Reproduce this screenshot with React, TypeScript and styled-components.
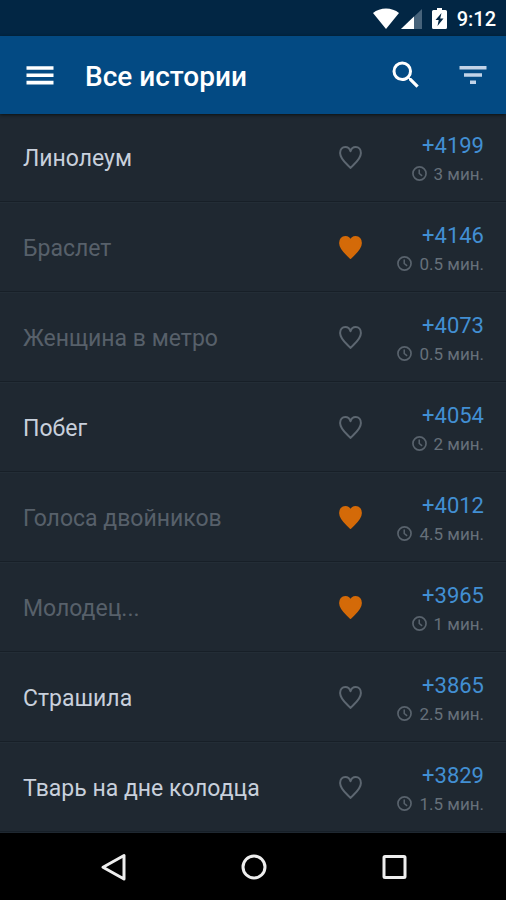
import React, { useState } from "react";
import styled, { createGlobalStyle } from "styled-components";

const GlobalStyle = createGlobalStyle`
  *, *::before, *::after { box-sizing: border-box; }
  body {
    margin: 0;
    background: #000;
    font-family: Roboto, "Noto Sans", sans-serif;
  }
`;

const Screen = styled.div`
  display: flex;
  flex-direction: column;
  min-height: 100vh;
  background: #1f2831;
`;

const StatusBar = styled.div`
  display: flex;
  align-items: center;
  justify-content: flex-end;
  height: 36px;
  padding: 1px 10px 0 0;
  background: #022644;
  color: #fff;
`;

const StatusIcons = styled.div`
  display: flex;
  align-items: center;
  gap: 10px;
`;

const Signals = styled.div`
  display: flex;
  align-items: center;
  gap: 2px;
`;

const Clock = styled.time`
  font-size: 20px;
  line-height: 24px;
  font-weight: 500;
`;

const Toolbar = styled.header`
  position: relative;
  z-index: 1;
  display: flex;
  align-items: center;
  height: 78px;
  padding: 0 15px 0 22px;
  background: #034a83;
  box-shadow: 0 1px 3px rgba(10, 16, 16, 0.9);
`;

const IconButton = styled.button<{ $dim?: boolean }>`
  display: flex;
  padding: 0;
  border: 0;
  background: none;
  color: ${(p) => (p.$dim ? "#c2d3e8" : "#fff")};
  cursor: pointer;
`;

const Title = styled.h1`
  flex: 1;
  margin: 0 0 0 27px;
  padding-top: 4px;
  color: #fff;
  font-size: 28px;
  line-height: 32px;
  font-weight: 500;
`;

const Actions = styled.div`
  display: flex;
  gap: 31px;
`;

/* The list is scrolled slightly beneath the toolbar. */
const List = styled.ul`
  flex: 1;
  margin: -2px 0 0;
  padding: 0;
  list-style: none;
`;

const Row = styled.li`
  display: flex;
  align-items: center;
  height: 90px;
  padding: 2px 22px 0 23px;
  border-bottom: 1px solid #171f27;
  box-shadow: inset 0 1px 0 #232d36;
`;

const StoryLink = styled.a<{ $read: boolean }>`
  flex: 1;
  padding-top: 2px;
  color: ${(p) => (p.$read ? "#57606a" : "#c8d0dc")};
  font-size: 23px;
  line-height: 28px;
  text-decoration: none;
`;

const Stats = styled.div`
  display: flex;
  flex-direction: column;
  align-items: flex-end;
  width: 121px;
`;

const Score = styled.span`
  color: #428fd3;
  font-size: 22px;
  line-height: 32px;
`;

const Duration = styled.span`
  display: flex;
  align-items: center;
  gap: 7px;
  color: #66707a;
  font-size: 17px;
  line-height: 24px;
`;

const NavBar = styled.nav`
  display: flex;
  align-items: center;
  justify-content: center;
  gap: 104px;
  height: 67px;
  padding-left: 1px;
  background: #000;
`;

const stories = [
  { title: "Линолеум", score: "+4199", time: "3 мин.", read: false, liked: false },
  { title: "Браслет", score: "+4146", time: "0.5 мин.", read: true, liked: true },
  { title: "Женщина в метро", score: "+4073", time: "0.5 мин.", read: true, liked: false },
  { title: "Побег", score: "+4054", time: "2 мин.", read: false, liked: false },
  { title: "Голоса двойников", score: "+4012", time: "4.5 мин.", read: true, liked: true },
  { title: "Молодец...", score: "+3965", time: "1 мин.", read: true, liked: true },
  { title: "Страшила", score: "+3865", time: "2.5 мин.", read: false, liked: false },
  { title: "Тварь на дне колодца", score: "+3829", time: "1.5 мин.", read: false, liked: false },
];

const WifiIcon = () => (
  <svg width="26" height="21" viewBox="0 0 26 21" aria-hidden="true">
    <path d="M0 5C7-1 19-1 26 5L13 21Z" fill="#fff" />
  </svg>
);

const CellIcon = () => (
  <svg width="21" height="20" viewBox="0 0 21 20" aria-hidden="true">
    <path d="M21 0V20H0Z" fill="#47637b" />
    <path d="M13 7.6V20H0Z" fill="#fff" />
  </svg>
);

const BatteryIcon = () => (
  <svg width="15" height="21" viewBox="0 0 15 21" aria-hidden="true">
    <path
      d="M5 0H10V2H13.5Q15 2 15 3.5V19.5Q15 21 13.5 21H1.5Q0 21 0 19.5V3.5Q0 2 1.5 2H5Z"
      fill="#fff"
    />
    <path d="M9.5 5L3.5 12H6.7L5.5 18L11.5 10.5H8.2Z" fill="#022644" />
  </svg>
);

const MenuIcon = () => (
  <svg width="36" height="36" viewBox="0 0 24 24" fill="currentColor" aria-hidden="true">
    <path d="M3 18.3h18v-2.4H3v2.4zm0-4.9h18V11H3v2.4zm0-7.3v2.4h18V6.1H3z" />
  </svg>
);

const SearchIcon = () => (
  <svg width="36" height="36" viewBox="0 0 24 24" fill="currentColor" aria-hidden="true">
    <path d="M15.5 14h-.79l-.28-.27A6.47 6.47 0 0 0 16 9.5 6.5 6.5 0 1 0 9.5 16c1.61 0 3.09-.59 4.23-1.57l.27.28v.79l5 4.99L20.49 19l-4.99-5zm-6 0a4.5 4.5 0 1 1 0-9 4.5 4.5 0 0 1 0 9z" />
  </svg>
);

const FilterIcon = () => (
  <svg width="36" height="36" viewBox="0 0 24 24" fill="currentColor" aria-hidden="true">
    <path d="M10 18h4v-2.4h-4V18zM3 6v2.4h18V6H3zm3 7.2h12v-2.4H6v2.4z" />
  </svg>
);

const HeartIcon = ({ filled }: { filled: boolean }) => (
  <svg width="24" height="24" viewBox="0 0 24 24" aria-hidden="true">
    <path
      d="M11.5 22C9 18.7 1.1 13.5 1.1 6.9C1.1 3.4 3.2 1 6.3 1C9 1 10.7 2.6 11.5 5.2C12.3 2.6 14 1 16.7 1C19.8 1 21.9 3.4 21.9 6.9C21.9 13.5 14 18.7 11.5 22Z"
      fill={filled ? "#d46a08" : "none"}
      stroke={filled ? "#d46a08" : "#5d6771"}
      strokeWidth="2"
      strokeLinejoin="round"
    />
  </svg>
);

const TimeIcon = () => (
  <svg width="15" height="15" viewBox="0 0 16 16" fill="none" stroke="#59636d" aria-hidden="true">
    <circle cx="8" cy="8" r="7" strokeWidth="1.8" />
    <path d="M7.7 3.8V8L10.8 10.6" strokeWidth="1.6" />
  </svg>
);

const BackIcon = () => (
  <svg width="36" height="36" viewBox="0 0 36 36" aria-hidden="true">
    <path d="M28 6.5V30L7 18.2Z" fill="none" stroke="#eee" strokeWidth="3" strokeLinejoin="round" />
  </svg>
);

const HomeIcon = () => (
  <svg width="36" height="36" viewBox="0 0 36 36" aria-hidden="true">
    <circle cx="18" cy="18" r="11" fill="none" stroke="#eee" strokeWidth="3" />
  </svg>
);

const RecentsIcon = () => (
  <svg width="36" height="36" viewBox="0 0 36 36" aria-hidden="true">
    <rect x="8" y="7.5" width="21" height="21" rx="1" fill="none" stroke="#eee" strokeWidth="3" />
  </svg>
);

function StoryRow({ story }: { story: (typeof stories)[number] }) {
  const [liked, setLiked] = useState(story.liked);
  return (
    <Row>
      <StoryLink href="#" $read={story.read}>{story.title}</StoryLink>
      <IconButton
        type="button"
        aria-label="В избранное"
        aria-pressed={liked}
        onClick={() => setLiked(!liked)}
      >
        <HeartIcon filled={liked} />
      </IconButton>
      <Stats>
        <Score>{story.score}</Score>
        <Duration>
          <TimeIcon />
          {story.time}
        </Duration>
      </Stats>
    </Row>
  );
}

export default function App() {
  return (
    <Screen>
      <GlobalStyle />
      <StatusBar>
        <StatusIcons>
          <Signals>
            <WifiIcon />
            <CellIcon />
          </Signals>
          <BatteryIcon />
          <Clock>9:12</Clock>
        </StatusIcons>
      </StatusBar>
      <Toolbar>
        <IconButton type="button" aria-label="Меню"><MenuIcon /></IconButton>
        <Title>Все истории</Title>
        <Actions>
          <IconButton type="button" aria-label="Поиск"><SearchIcon /></IconButton>
          <IconButton type="button" aria-label="Сортировка" $dim><FilterIcon /></IconButton>
        </Actions>
      </Toolbar>
      <List>
        {stories.map((story) => (
          <StoryRow key={story.title} story={story} />
        ))}
      </List>
      <NavBar>
        <IconButton type="button" aria-label="Назад"><BackIcon /></IconButton>
        <IconButton type="button" aria-label="Домой"><HomeIcon /></IconButton>
        <IconButton type="button" aria-label="Недавние"><RecentsIcon /></IconButton>
      </NavBar>
    </Screen>
  );
}
